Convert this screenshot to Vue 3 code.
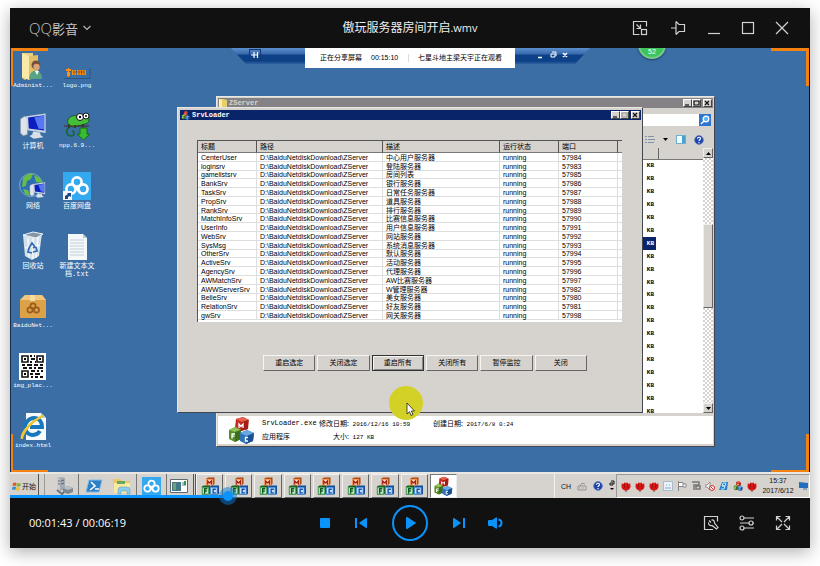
<script setup>
import { ref, computed } from 'vue'

const duration = 379
const position = ref(102)
const played = computed(() => (position.value / duration) * 100 + '%')

const services = [
  ['CenterUser', '中心用户服务器', 57984],
  ['loginsrv', '登陆服务器', 57983],
  ['gamelistsrv', '房间列表', 57985],
  ['BankSrv', '银行服务器', 57986],
  ['TaskSrv', '日常任务服务器', 57987],
  ['PropSrv', '道具服务器', 57988],
  ['RankSrv', '排行服务器', 57989],
  ['MatchInfoSrv', '比赛信息服务器', 57990],
  ['UserInfo', '用户信息服务器', 57991],
  ['WebSrv', '网站服务器', 57992],
  ['SysMsg', '系统消息服务器', 57993],
  ['OtherSrv', '默认服务器', 57994],
  ['ActiveSrv', '活动服务器', 57995],
  ['AgencySrv', '代理服务器', 57996],
  ['AWMatchSrv', 'AW比赛服务器', 57997],
  ['AWWServerSrv', 'W管理服务器', 57982],
  ['BelleSrv', '美女服务器', 57980],
  ['RelationSrv', '好友服务器', 57981],
  ['gwSrv', '网关服务器', 57998]
]
const actions = ['重启选定', '关闭选定', '重启所有', '关闭所有', '暂停监控', '关闭']
</script>

<template>
  <div class="page">
    <svg class="defs" aria-hidden="true">
      <symbol id="blocks" viewBox="0 0 20 20">
        <path d="M6 1l2-1h7v7l-2 2H6z" fill="#a8430e" /><rect x="5.500" y="1.500" width="8" height="8" fill="#f08a4b" /><rect x="6.500" y="2.500" width="6" height="6" fill="#fbd7b5" />
        <path d="M7.500 8V4l2 2 2-2v4" fill="none" stroke="#a11b12" stroke-width="1.400" />
        <path d="M1 10l2-1h7v9l-1 1H1z" fill="#1d5c2b" /><rect x="1" y="10.500" width="8" height="8.500" fill="#3f9a4e" /><rect x="2" y="11.500" width="6" height="6.500" fill="#c3e6c5" />
        <path d="M4 18v-5.500h3M4 15h2.500" fill="none" stroke="#125a24" stroke-width="1.500" />
        <path d="M10 10l2-1h8v9l-1 1h-9z" fill="#164d93" /><rect x="10" y="10.500" width="8.500" height="8.500" fill="#3f86d2" /><rect x="11" y="11.500" width="6.500" height="6.500" fill="#c4e0fa" />
        <path d="M16.500 13h-3v4h3" fill="none" stroke="#1550a6" stroke-width="1.500" />
      </symbol>
      <symbol id="cubes" viewBox="0 0 28 28">
        <path d="M9 3l7-2 6 3-1 9-7 2-6-3z" fill="#c52c20" /><path d="M9 3l7-2 6 3-7 2z" fill="#e8604f" /><path d="M21 4l-6 2-1 9 7-2z" fill="#a31d14" />
        <path d="M2 14l6-3 6 3v9l-6 3-6-3z" fill="#568c29" /><path d="M2 14l6-3 6 3-6 2z" fill="#8fc155" /><path d="M14 14l-6 2v10l6-3z" fill="#3d6e1c" />
        <path d="M13 17l7-3 7 3-1 8-7 3-6-3z" fill="#2f72b8" /><path d="M13 17l7-3 7 3-7 3z" fill="#68a8e0" /><path d="M27 17l-7 3-1 8 7-3z" fill="#1c4f91" />
        <path d="M12 12V8l2 2.500L16 8v4M5 22.500V18h3M5 20.200h2.500M21 21.500h-2.500V25H21" fill="none" stroke="#fff" stroke-width="1.300" />
      </symbol>
      <symbol id="cloud" viewBox="0 0 28 28">
        <g fill="none" stroke="#fff" stroke-width="2.600"><circle cx="14" cy="10" r="4.600" /><circle cx="8" cy="17" r="4.600" /><circle cx="20" cy="17" r="4.600" /><path d="M11 14l6 6" /></g>
      </symbol>
      <symbol id="help" viewBox="0 0 12 12">
        <circle cx="6" cy="6" r="5.300" fill="#1d44ac" stroke="#7085c0" /><path d="M4.200 4.500c0-2.500 3.800-2.300 3.600 0C7.700 5.900 6 5.700 6 7.300M6 8.400v1.400" fill="none" stroke="#fff" stroke-width="1.400" />
      </symbol>
      <symbol id="monitor" viewBox="0 0 20 20">
        <path d="M1 5l3-2 2 1v12l-3 1-2-2z" fill="#dfe4ea" stroke="#8795a5" stroke-width=".500" /><path d="M5 3l14-2v14L6 13z" fill="#c9d3df" /><path d="M6.500 4L18 2.400v10.800l-11-1.500z" fill="#0b1ec0" /><path d="M11 4l7-1.600v10l-4-.5z" fill="#5577f0" /><path d="M10 14l5 .6.500 2 2 1.500-7 1-3-2 2-1z" fill="#d8e0e8" />
      </symbol>
      <symbol id="flower" viewBox="0 0 12 12">
        <path d="M1 2l2 1 1.500-2L6 2l1.500-1L9 3l2-1 .5 4C11 9 9 11 6 11S1 9 .5 6z" fill="#d81616" /><path d="M4 3v5M8 3v5" stroke="#8e0c0c" /><path d="M5 11h2v1H5z" fill="#333" />
      </symbol>
    </svg>

    <main class="player">
      <header class="titlebar">
        <button class="brand"><span class="brand-name">QQ<span class="brand-zh">影音</span></span>
          <svg width="8" height="6" viewBox="0 0 8 6"><path d="M.5 1L4 4.500 7.500 1" fill="none" stroke="#b5b5b5" stroke-width="1.200" /></svg>
        </button>
        <h1 class="title">傲玩服务器房间开启<span class="ext">.wmv</span></h1>
        <nav class="window-tools">
          <button class="wide" aria-label="Mini mode"><svg width="16" height="16" viewBox="0 0 16 16"><path d="M14.500 6.500v-5H1.500v13h6M4.500 4.500l4 4M8.500 4.500v4h-4" /><rect x="9.500" y="9.500" width="5" height="5" /></svg></button>
          <button class="wide" aria-label="Pin"><svg width="16" height="16" viewBox="0 0 16 16"><path d="M1 8h5M6 1.500v13M6 1.500l3 3h5.500v7H9l-3 3" /></svg></button>
          <button aria-label="Minimize"><svg width="14" height="14" viewBox="0 0 14 14"><path d="M1 12.500h12" /></svg></button>
          <button aria-label="Maximize"><svg width="14" height="14" viewBox="0 0 14 14"><rect x="1.500" y="1.500" width="11" height="11" /></svg></button>
          <button aria-label="Close"><svg width="14" height="14" viewBox="0 0 14 14"><path d="M1 1l12 12M13 1L1 13" /></svg></button>
        </nav>
      </header>

      <section class="stage">
        <div class="desktop">
          <div class="shortcuts">
            <div class="shortcut">
              <svg width="30" height="30" viewBox="0 0 30 30"><path d="M4 2l11 0v22l-8 5-3-2z" fill="#ead27c" /><path d="M4 2l7 3v24l-7-3z" fill="#fae9a6" /><path d="M11 5l9-1v21l-9 4z" fill="#dfc069" /><circle cx="18" cy="14" r="4.500" fill="#76503a" /><circle cx="18.500" cy="16" r="3.200" fill="#d9a47a" /><path d="M11 28c1-8 5-9 8-8s5 3 5 8z" fill="#56a386" /><path d="M17 20l2 4 2-4z" fill="#fff" /></svg>
              <span>Administ...</span>
            </div>
            <div class="shortcut">
              <svg width="30" height="30" viewBox="0 0 30 30"><path d="M2 27.500h26V17" fill="none" stroke="#2a568b" /><path d="M4 18h5v2H4zM5 21h3v4H5zM6 17h1v9H6zM10 19h4v5h-4zM15 19h4v5h-4zM20 19h4v5h-4z" fill="#f49412" /><path d="M11 21h12M12 19v5M17 19v5M22 19v5" stroke="#8b4307" stroke-width=".700" /></svg>
              <span>logo.png</span>
            </div>
            <div class="shortcut">
              <svg width="28" height="30" viewBox="0 0 20 20"><use href="#monitor" /></svg>
              <span class="zh">计算机</span>
            </div>
            <div class="shortcut">
              <svg width="30" height="30" viewBox="0 0 30 30"><path d="M6 13C4 7 10 3 17 5l9 1c2 3 1 6-3 7l-7 2c-4 2-7 1-10-2z" fill="#43be38" stroke="#173b17" stroke-width=".700" /><path d="M8 16c-5 2-4 9 1 9 4 0 4-5 1-5" fill="none" stroke="#176635" stroke-width="1.600" /><circle cx="18" cy="6" r="3.500" fill="#fff" stroke="#111" /><circle cx="24" cy="5" r="3" fill="#fff" stroke="#111" /><circle cx="18" cy="6" r="1.200" /><circle cx="24" cy="5" r="1" /><path d="M2 15h25M7 13v4M13 14v3M21 13v4" stroke="#402a1b" stroke-width="1.200" /><path d="M18 17h7v6h3l-6.500 6-6.500-6h3z" fill="#36bb31" stroke="#1b661b" /></svg>
              <span>npp.6.9...</span>
            </div>
            <div class="shortcut">
              <svg width="30" height="30" viewBox="0 0 30 30"><circle cx="13" cy="14" r="11.500" fill="#2e6db6" stroke="#7ba9cc" /><path d="M5 7c4-5 9-5 10-4l-2 5-4 2-1 5-4 1zM16 4l6 3 2 5-6-1zM5 18l5 1 2 6-5-2z" fill="#65bd45" /><svg x="11" y="9" width="17" height="20"><use href="#monitor" /></svg></svg>
              <span class="zh">网络</span>
            </div>
            <div class="shortcut">
              <svg width="30" height="30" viewBox="0 0 30 30"><rect x="1" y="1" width="28" height="28" fill="#35a9ef" /><svg x="1" y="1" width="28" height="28"><use href="#cloud" /></svg><rect x="1" y="20" width="9" height="9" fill="#f7f7f7" /><path d="M3 28v-3l3-2-1-1h4v4l-1-1-2 1v2z" fill="#1c4685" /></svg>
              <span class="zh">百度网盘</span>
            </div>
            <div class="shortcut">
              <svg width="30" height="30" viewBox="0 0 30 30"><path d="M5 4l19-2-3 23-7 4-7-4z" fill="#d3e1eb" /><path d="M5 4l10-3 10 2-7 4z" fill="#8496a6" stroke="#e9f2f7" /><path d="M10 7l1 19M15 7v21M20 6l-2 21M7 17l15-3" stroke="#f5f9fb" stroke-width="1.500" /><path d="M11 17l3-5 3 4-2 1M18 16l1 4-4 1M14 22l-4-1 1-4" fill="none" stroke="#376eb4" stroke-width="1.800" /></svg>
              <span class="zh">回收站</span>
            </div>
            <div class="shortcut">
              <svg width="30" height="30" viewBox="0 0 30 30"><path d="M6 3h15l4 4v22H6z" fill="#f5f8fa" /><path d="M21 3v4h4z" fill="#b9c7d1" /><path d="M8 9h14M8 12h14M8 15h14M8 18h14M8 21h14M8 24h14" stroke="#c2ced8" /></svg>
              <span class="zh">新建文本文<br />档.txt</span>
            </div>
            <div class="shortcut solo">
              <svg width="30" height="30" viewBox="0 0 30 30"><path d="M2 9l5-5h17l4 5v18H2z" fill="#d2943b" /><path d="M2 9l5-5h17l4 5z" fill="#f0c77d" /><path d="M2 9h26v18H2z" fill="#dda148" /><path d="M12 4h5v6h-5z" fill="#f8dc9e" /><g fill="none" stroke="#9a5d1e" stroke-width="1.600"><circle cx="15" cy="15" r="2.600" /><circle cx="12" cy="19" r="2.600" /><circle cx="18.500" cy="19" r="2.600" /></g></svg>
              <span>BaiduNet...</span>
            </div>
            <div class="shortcut solo">
              <svg width="30" height="30" viewBox="0 0 30 30"><rect x="1" y="2" width="27" height="27" fill="#fff" /><path d="M4 5h6v6H4zM19 5h6v6h-6zM4 20h6v6H4z" fill="none" stroke="#111" stroke-width="1.600" /><path d="M6 7h2v2H6zM21 7h2v2h-2zM6 22h2v2H6z" /><path d="M12 5h2M16 5h1M13 8h4M12 11h2M17 11h1M4 14h3M9 14h5M16 14h4M22 14h3M5 17h4M11 17h3M16 17h2M20 17h5M13 20h4M19 20h2M23 20h2M12 23h3M17 23h5M13 26h2M17 26h3M22 26h3" stroke="#111" stroke-width="1.800" /></svg>
              <span>img_plac...</span>
            </div>
            <div class="shortcut solo">
              <svg width="30" height="30" viewBox="0 0 30 30"><path d="M8 2h15l5 5v22H8z" fill="#f8fbfd" /><path d="M23 2v5h5z" fill="#b8c9d5" /><path d="M22 20c-2 3-5 4-7 4-5 0-8-4-8-8s4-9 9-9c5 0 8 4 8 9H12" fill="none" stroke="#1878be" stroke-width="4" /><path d="M3 28C1 24 9 11 24 4c2-1 2 1 1 2C12 13 6 22 5 28z" fill="#edc733" /></svg>
              <span>index.html</span>
            </div>
          </div>

          <div class="share-bar">
            <span class="share-pin"><svg width="8" height="8" viewBox="0 0 8 8"><path d="M0 4h3M3 1v6M3 4h4M6.500 1v6" fill="none" stroke="#fff" stroke-width="1.200" /></svg></span>
            <div class="share-note"><span>正在分享屏幕</span><span class="share-time">00:15:10</span><i></i><span class="share-watch">七星斗地主梁天宇正在观看</span></div>
            <svg class="share-ctl" width="32" height="10" viewBox="0 0 32 10"><path d="M1 7.500h4M26 3l4 4M30 3l-4 4" stroke="#fff" stroke-width="1.500" /><path d="M14 4h4v3h-4zM15 2h4v4" fill="none" stroke="#fff" /></svg>
          </div>
          <div class="bubble">52</div>

          <div class="win explorer">
            <div class="bar gray">
              <svg width="8" height="9" viewBox="0 0 8 9"><path d="M0 0h4l4 1v8H1L0 8z" fill="#e9cf6b" /><path d="M0 0l3 1v8L0 8z" fill="#fff1ad" /></svg>
              <span class="bar-text">ZServer</span>
              <div class="bar-btns"><button aria-label="Minimize window"><svg width="9" height="8" viewBox="0 0 9 8"><path d="M2 6h4" /></svg></button><button aria-label="Restore window"><svg width="9" height="8" viewBox="0 0 9 8"><path d="M2 2h5v4H2z" /></svg></button><button class="x" aria-label="Close window"><svg width="9" height="8" viewBox="0 0 9 8"><path d="M2 2l4 4M6 2L2 6" /></svg></button></div>
            </div>
            <div class="address"><input type="text" aria-label="Search folder" /><button aria-label="Search"><svg width="12" height="12" viewBox="0 0 12 12"><circle cx="7" cy="5" r="2.800" fill="#5db6ef" stroke="#fff" stroke-width="1.300" /><path d="M5 7l-3 3" stroke="#fff" stroke-width="1.500" /></svg></button></div>
            <div class="tools">
              <svg width="10" height="9" viewBox="0 0 10 9"><path d="M0 1.500h2M3 1.500h6M0 4.500h2M3 4.500h7M0 7.500h2M3 7.500h6" stroke="#8492a5" /></svg>
              <svg width="5" height="3" viewBox="0 0 5 3"><path d="M0 0h5L2.500 3z" /></svg>
              <svg width="10" height="9" viewBox="0 0 10 9"><rect x=".5" y=".5" width="9" height="8" fill="#f4fafd" stroke="#6daed1" /><path d="M6 1h3v7H6z" fill="#43a4cb" /></svg>
              <svg width="10" height="10"><use href="#help" /></svg>
            </div>
            <div class="files">
              <div class="list">
                <div class="list-head"><span></span></div>
                <ul><li v-for="n in 20" :key="n" :class="{ selected: n === 7 }"><span>KB</span></li></ul>
              </div>
              <div class="scroll"><button aria-label="Scroll up"><svg width="5" height="3" viewBox="0 0 5 3"><path d="M0 3h5L2.500 0z" /></svg></button><div class="thumb"></div><button aria-label="Scroll down"><svg width="5" height="3" viewBox="0 0 5 3"><path d="M0 0h5L2.500 3z" /></svg></button></div>
            </div>
            <div class="details">
              <svg width="28" height="28"><use href="#cubes" /></svg>
              <dl>
                <dt class="big">SrvLoader.exe</dt><dd><span class="zh">修改日期:</span> 2016/12/16 10:59</dd><dd><span class="zh">创建日期:</span> 2017/6/8 0:24</dd>
                <dt class="zh">应用程序</dt><dd class="size"><span class="zh">大小:</span> 127 KB</dd>
              </dl>
            </div>
          </div>

          <div class="win loader">
            <div class="bar navy">
              <svg width="9" height="9"><use href="#cubes" /></svg>
              <span class="bar-text">SrvLoader</span>
              <div class="bar-btns"><button aria-label="Minimize SrvLoader"><svg width="9" height="8" viewBox="0 0 9 8"><path d="M2 6h4" /></svg></button><button disabled aria-label="Maximize SrvLoader"><svg width="9" height="8" viewBox="0 0 9 8"><path d="M2 2h5v4H2z" /></svg></button><button class="x" aria-label="Close SrvLoader"><svg width="9" height="8" viewBox="0 0 9 8"><path d="M2 2l4 4M6 2L2 6" /></svg></button></div>
            </div>
            <div class="grid-box">
              <table>
                <colgroup><col class="c1" /><col class="c2" /><col class="c3" /><col class="c4" /><col class="c4" /><col /></colgroup>
                <thead><tr><th>标题</th><th>路径</th><th>描述</th><th>运行状态</th><th>端口</th><th></th></tr></thead>
                <tbody>
                  <tr v-for="s in services" :key="s[0]"><td>{{ s[0] }}</td><td>D:\BaiduNetdiskDownload\ZServer</td><td>{{ s[1] }}</td><td>running</td><td>{{ s[2] }}</td><td></td></tr>
                </tbody>
              </table>
            </div>
            <div class="actions"><button v-for="(a, i) in actions" :key="a" :class="{ focused: i === 2 }">{{ a }}</button></div>
          </div>

          <div class="pointer"><svg width="9" height="15" viewBox="0 0 9 15"><path d="M1 1v11l2.500-2.300L5 13.500l2-1-1.700-3.500H8.500z" fill="#fff" stroke="#222" stroke-width=".800" /></svg></div>
          <i class="corner tl"></i><i class="corner tr"></i><i class="corner bl"></i><i class="corner br"></i>
        </div>

        <div class="taskbar">
          <button class="start"><svg width="9" height="9" viewBox="0 0 9 9"><path d="M1 1q2-1 3.500 0L4 4Q2 3 .5 4z" fill="#ec5326" /><path d="M5 1q2 1 4 0l-.7 3q-2 1-3.800 0z" fill="#7eb52c" /><path d="M.5 5q2-1 3.500 0l-.5 3Q2 7 0 8z" fill="#328fd2" /><path d="M4.500 5q2 1 3.700 0l-.7 3q-2 1-3.500 0z" fill="#f4bd25" /></svg>开始</button>
          <div class="quick">
            <button aria-label="Server manager"><svg width="18" height="18" viewBox="0 0 18 18"><path d="M2 1l5-1 3 1v11l-5 2-3-1z" fill="#a3abb0" /><path d="M2 1l3 1v12l-3-1z" fill="#c5ccd0" /><path d="M3 4h2M3 7h2M6 4l3-1M6 7l3-1" stroke="#5a666d" /><path d="M8 11l5-2 5 2v4l-5 2-5-2z" fill="#7e888f" /><path d="M8 11l5-2 5 2-5 2z" fill="#bac1c5" /><path d="M2 13l5 4 2-2" fill="none" stroke="#69737a" stroke-width="2" /></svg></button>
            <button aria-label="PowerShell"><svg width="18" height="18" viewBox="0 0 18 18"><path d="M4 3h13l-3 12H1z" fill="#2b7fc4" stroke="#8bbbe1" /><path d="M6 5l4 4-5 4M10 12h4" fill="none" stroke="#fff" stroke-width="1.600" /></svg></button>
            <button aria-label="Explorer"><svg width="18" height="18" viewBox="0 0 18 18"><path d="M0 2h7l2 2h8v12H1z" fill="#e9c862" /><path d="M1 6h16v10H1z" fill="#fae9a0" /><path d="M4 4h8v3H4z" fill="#66a85e" /><path d="M5 17v-4q0-3 3-3h6q3 0 3 3v4h-3v-3H8v3z" fill="#8bcceb" stroke="#539ab9" stroke-width=".500" /></svg></button>
            <button class="wide-gap" aria-label="Baidu"><svg width="19" height="19" viewBox="0 0 28 28"><path d="M0 0h28v28H0z" fill="#35a9ef" /><use href="#cloud" /></svg></button>
            <button aria-label="Console"><svg width="18" height="16" viewBox="0 0 18 16"><path d="M.5 1.500h17v13H.5z" fill="#fff" stroke="#5c6870" /><path d="M2 4h9v9H2z" fill="#427788" /><path d="M3 5h3v7H3z" fill="#719f78" /><path d="M12 5h4M12 7h4" stroke="#567586" /><path d="M15 3v4" stroke="#2f9c41" stroke-width="2" /></svg></button>
          </div>
          <div class="tasks">
            <button v-for="n in 8" :key="n" :aria-label="'Service ' + n"><svg width="18" height="19"><use href="#blocks" /></svg></button>
            <button class="active" aria-label="SrvLoader"><svg width="20" height="20"><use href="#cubes" /></svg></button>
          </div>
          <div class="lang">
            <span>CH</span>
            <svg width="10" height="9" viewBox="0 0 10 9"><path d="M1 4h8v4H1zM3 4l2-3 3 1" fill="none" stroke="#959595" /><path d="M2 6h6" stroke="#999" stroke-dasharray="1 1" /></svg>
            <svg width="10" height="10"><use href="#help" /></svg>
            <svg width="6" height="12" viewBox="0 0 6 12"><path d="M1 3h3v2H1zM2 1h3v3" fill="none" stroke="#111" /><path d="M1 8h4l-2 2z" /></svg>
          </div>
          <div class="tray">
            <svg v-for="n in 3" :key="n" width="10" height="11"><use href="#flower" /></svg>
            <svg width="10" height="10" viewBox="0 0 10 10"><rect x=".5" y=".5" width="9" height="9" fill="#e9f2fa" stroke="#a8bccb" /><path d="M2 7h6M3 4h1M6 4h1" stroke="#8faabd" /></svg>
            <svg width="10" height="10" viewBox="0 0 10 10"><path d="M1.500 0v10M2 1.500h4v4H2M6 3h3v3H6" fill="#fff" stroke="#858585" /></svg>
            <svg width="10" height="10" viewBox="0 0 10 10"><path d="M1 1h7v3H3v5M5 5h4v3H5z" fill="none" stroke="#777" stroke-width="1.500" /></svg>
            <svg width="10" height="10" viewBox="0 0 10 10"><path d="M0 4h2l3-3v8L2 6H0z" fill="#eee" stroke="#777" stroke-width=".700" /><circle cx="7" cy="7" r="2.500" fill="#fff" stroke="#d12d25" /><path d="M5.500 5.500l3 3" stroke="#d12d25" /></svg>
            <svg width="10" height="10" viewBox="0 0 10 10"><path d="M3 1h6l-1 8H0z" fill="#2a81c5" /><path d="M4 2h3L6 5H3zM3 5h3L5 8H2" fill="none" stroke="#c4e8ff" /></svg>
            <svg width="10" height="10"><use href="#cubes" /></svg>
            <svg width="10" height="11"><use href="#flower" /></svg>
            <time>15:37<br />2017/6/12</time>
            <svg width="9" height="8" viewBox="0 0 9 8"><path d="M0 0l9 1v5H0z" fill="#246fbd" /><path d="M4 6h4v2H4z" fill="#84a5bd" /></svg>
          </div>
        </div>
        <input v-model.number="position" class="seek" type="range" min="0" :max="duration" aria-label="播放进度" :style="{ '--played': played }" />
      </section>

      <footer class="controls">
        <div class="clock"><span>00:01:43</span><span>/</span><span>00:06:19</span></div>
        <div class="transport">
          <button aria-label="停止"><svg width="16" height="16" viewBox="0 0 16 16"><rect x="3" y="3" width="10" height="10" rx="1" /></svg></button>
          <button aria-label="上一个"><svg width="16" height="16" viewBox="0 0 16 16"><path d="M2 3h2v10H2zM14 4v8q0 1.500-1.300.7L6.500 8.600q-.8-.6 0-1.200l6.200-4.100Q14 2.500 14 4z" /></svg></button>
          <button class="play" aria-label="播放"><svg width="38" height="38" viewBox="0 0 38 38"><circle cx="19" cy="19" r="17" fill="none" stroke="#0a93fb" stroke-width="2" /><path d="M15 14q0-1.500 1.300-1l8.200 5.400q.8.600 0 1.200L16.300 25Q15 25.500 15 24z" /></svg></button>
          <button aria-label="下一个"><svg width="16" height="16" viewBox="0 0 16 16"><path d="M12 3h2v10h-2zM2 4v8q0 1.500 1.300.7l6.200-4.100q.8-.6 0-1.200L3.300 3.300Q2 2.500 2 4z" /></svg></button>
          <button aria-label="音量"><svg width="16" height="16" viewBox="0 0 16 16"><path d="M2 5h3l4-2.500q1-.5 1 .5v10q0 1-1 .5L5 11H2q-1 0-1-1V6q0-1 1-1z" /><path d="M11.500 4.500q3 .5 3 3.500t-3 3.500" fill="none" stroke="#0a93fb" stroke-width="2" /></svg></button>
        </div>
        <div class="extras">
          <button aria-label="工具箱"><svg width="16" height="16" viewBox="0 0 16 16"><path d="M14.500 6.500v-5H1.500v13H10" /><path d="M6 5.500l2 2M8.500 5q3-.5 3 3l3.500 4.500-1.500 1.500L9 10.500q-3.500.5-3.500-3" /></svg></button>
          <button aria-label="播放设置"><svg width="16" height="16" viewBox="0 0 16 16"><circle cx="3" cy="3" r="2" /><path d="M5 3h10M1 8h9M14 8h1M5 13h10" /><circle cx="12" cy="8" r="2" /><circle cx="3" cy="13" r="2" /></svg></button>
          <button aria-label="全屏"><svg width="16" height="16" viewBox="0 0 16 16"><path d="M1.500 5.500v-4h4M10.500 1.500h4v4M14.500 10.500v4h-4M5.500 14.500h-4v-4M2 2l5 5M14 2L9 7M14 14L9 9M2 14l5-5" /></svg></button>
        </div>
      </footer>
    </main>
  </div>
</template>

<style>
body { margin: 0; background: #fff; }
</style>

<style scoped>
* { box-sizing: border-box; }
button { border: 0; padding: 0; margin: 0; background: none; color: inherit; font: inherit; display: flex; align-items: center; justify-content: center; }
svg { display: block; flex: none; }
.defs { position: absolute; width: 0; height: 0; }
.page { min-height: 100vh; padding: 8px 10px 18px; display: flex; overflow: hidden; font-family: "Open Sans", "Noto Sans CJK SC", sans-serif; }
.player { flex: 1; min-width: 0; display: flex; flex-direction: column; background: #111; box-shadow: 0 4px 16px rgba(0, 0, 0, .32); }

.titlebar { height: 40px; display: grid; grid-template-columns: 1fr auto 1fr; align-items: center; color: #eee; }
.brand { justify-self: start; margin-left: 19px; gap: 5px; color: #c4c4c4; }
.brand-name { font-size: 15px; font-weight: 300; line-height: 20px; }
.brand-zh { font-size: 13px; font-weight: 400; }
.title { margin: 0; font-size: 12px; font-weight: 400; line-height: 18px; }
.ext { font-size: 11px; }
.window-tools { display: flex; justify-self: end; padding-right: 11px; }
.window-tools button { width: 34px; height: 40px; }
.window-tools .wide { width: 38px; }
.window-tools svg, .extras svg { fill: none; stroke: #d2d2d2; stroke-width: 1.2; }

.stage { flex: 1; position: relative; display: flex; flex-direction: column; }
.desktop { flex: 1; min-height: 424px; position: relative; overflow: hidden; background: #3a6ea5; border-left: 1px solid #1b2c49; border-right: 1px solid #111; color: #000; font-size: 7px; line-height: 8px; font-family: "Liberation Sans", "Noto Sans CJK SC", sans-serif; }
.zh { font-size: 7px; font-family: "Liberation Mono", "Noto Sans CJK SC", monospace; }
.shortcuts { display: grid; grid-template-columns: 44px 44px; grid-auto-rows: 60px; padding-top: 3px; width: 88px; }
.shortcut { display: flex; flex-direction: column; align-items: center; gap: 1px; color: #fff; text-align: center; font-family: "Liberation Mono", monospace; font-size: 6px; }
.shortcut .zh { white-space: nowrap; }
.solo { grid-column: 1; }

.share-bar { position: absolute; top: 0; left: 220px; width: 359px; height: 20px; display: flex; padding-left: 18px; }
.share-bar::before { content: ""; position: absolute; inset: 0 0 4px; background: linear-gradient(#5c8fce, #3769ac 6px, #0c4087 7px, #0c4087 13px, #2f62a0); clip-path: polygon(0 0, 100% 0, 344px 100%, 15px 100%); }
.share-pin { position: relative; width: 12px; height: 12px; margin-top: 1px; border: 1px solid #16386c; display: grid; place-items: center; }
.share-note { position: relative; width: 210px; margin-left: 44px; background: #fff; display: flex; align-items: center; padding: 0 13px 0 15px; }
.share-time { margin-left: 9px; }
.share-note i { width: 1px; height: 8px; background: #ddd; margin: 0 auto; }
.share-ctl { position: relative; margin: 2px 0 0 22px; }
.bubble { position: absolute; top: -17px; left: 627px; width: 28px; height: 28px; border-radius: 50%; background: #3cc65a; border: 2px solid #7cc98d; box-shadow: 0 1px 2px #1c4067; color: #fff; text-align: center; padding-top: 15px; }

.win { position: absolute; background: #d6d3ce; border: 1px solid; border-color: #e9e7e2 #44474d #44474d #e9e7e2; display: flex; flex-direction: column; }
.bar { height: 10px; flex: none; display: flex; align-items: center; gap: 2px; padding: 0 1px; }
.gray { background: #848284; color: #d6d3ce; }
.navy { background: #0a246a; color: #fff; }
.bar-text { font-family: "Liberation Mono", monospace; font-weight: 700; }
.bar-btns { margin-left: auto; display: flex; }
.bar-btns button { width: 9px; height: 8px; background: #d6d3ce; border: 1px solid; border-color: #fff #444 #444 #fff; }
.bar-btns .x { margin-left: 2px; }
.bar-btns svg { fill: none; stroke: #111; stroke-width: 1.2; }
.bar-btns button:disabled svg { stroke: #999; }

.explorer { left: 205px; top: 48px; width: 499px; height: 351px; padding: 1px 1px 2px; }
.address { display: flex; justify-content: flex-end; padding: 6px 2px 5px 0; }
.address input { width: 100px; height: 12px; border: 0; padding: 0; background: #fff; border-radius: 0; }
.address button { background: #2c75cf; width: 12px; height: 12px; }
.tools { display: flex; justify-content: flex-end; align-items: center; gap: 8px; height: 17px; padding-right: 9px; }
.files { flex: 1; min-height: 0; display: flex; background: #fff; }
.list { flex: 1; min-width: 0; overflow: hidden; }
.list-head { height: 12px; background: #d6d3ce; border-bottom: 1px solid #777; }
.list-head span { display: block; width: 441px; height: 11px; border-right: 1px solid #666; }
.list ul { list-style: none; margin: 0; padding: 0; height: 258px; width: 438px; display: grid; grid-auto-rows: 1fr; }
.list li { display: flex; align-items: center; justify-content: flex-end; padding-right: 2px; font: 700 6px/8px "Liberation Mono", monospace; }
.list .selected { background: #0a246a; color: #fff; }
.scroll { width: 10px; display: flex; flex-direction: column; background: repeating-conic-gradient(#fff 0 25%, #d6d3ce 0 50%) 0 0 / 4px 4px; }
.scroll button { height: 10px; flex: none; background: #d6d3ce; border: 1px solid; border-color: #eee #666 #666 #eee; }
.thumb { background: #d6d3ce; border: 1px solid; border-color: #eee #666 #666 #eee; height: 84px; margin: 66px 0 auto; }
.details { height: 31px; flex: none; border-top: 3px solid #d6d3ce; background: #fff; display: flex; align-items: center; gap: 7px; padding-left: 9px; }
.details dl { margin: 0; display: grid; grid-template-columns: 57px 114px auto; row-gap: 3px; font: 6px/8px "Liberation Mono", monospace; }
.details dd { margin: 0; }
.details .big { font-size: 7px; }
.details .size { padding-left: 14px; }
.details .zh { font-size: 7px; line-height: 8px; font-family: "Noto Sans CJK SC", sans-serif; }

.loader { left: 166px; top: 59px; width: 466px; height: 306px; padding: 2px 1px 2px 2px; }
.grid-box { width: 425px; height: 182px; margin: 20px 0 0 17px; background: #fff; border-top: 1px solid #555; border-left: 1px solid #555; flex: none; }
table { width: 424px; height: 179px; border-collapse: separate; border-spacing: 0; table-layout: fixed; }
.c1 { width: 59px; } .c2 { width: 126px; } .c3 { width: 117px; } .c4 { width: 59px; }
th, td { padding: 0 3px; font-weight: 400; text-align: left; line-height: 7px; white-space: nowrap; }
th { height: 12px; background: #d6d3ce; border-right: 1px solid #555; border-bottom: 1px solid #777; }
th:last-child { border-right: 0; }
td { box-shadow: inset -1px -1px #dedede; }
td:last-child { box-shadow: inset 0 -1px #dedede; }
.actions { display: grid; grid-template-columns: repeat(6, 1fr); gap: 2px; width: 324px; margin: 33px 0 0 83px; }
.actions button { height: 16px; background: #d6d3ce; border: 1px solid; border-color: #f6f5f2 #666 #666 #f6f5f2; }
.actions .focused { border-color: #333; box-shadow: inset 1px 1px #f6f5f2, inset -1px -1px #888; }

.pointer { position: absolute; left: 378px; top: 338px; width: 34px; height: 34px; border-radius: 50%; background: #d3d126; padding: 16px 0 0 17px; }
.corner { position: absolute; width: 38px; height: 38px; border: 0 solid #f5820f; }
.tl { top: 0; left: -1px; border-width: 3px 0 0 3px; }
.tr { top: 0; right: 0; border-width: 3px 3px 0 0; }
.bl { bottom: 0; left: -1px; border-width: 0 0 2px 3px; }
.br { bottom: 0; right: 0; border-width: 0 3px 2px 0; }

.taskbar { height: 26px; display: flex; background: #d6d3ce; border-top: 2px solid #e9e7e3; font: 7px/9px "Liberation Sans", "Noto Sans CJK SC", sans-serif; color: #111; }
.taskbar button { height: 24px; }
.start { width: 29px; gap: 1px; border-right: 1px solid #555; }
.quick { display: flex; margin-left: 5px; border-left: 1px solid #999; padding-left: 5px; border-right: 3px double #555; width: 152px; }
.quick button { width: 29px; border-right: 1px solid #777; }
.quick button:nth-child(2) { border-right: 0; }
.quick .wide-gap { width: 30px; }
.quick button:last-child { width: 24px; border: 0; }
.tasks { display: grid; grid-template-columns: repeat(9, 1fr); width: 263px; }
.tasks button { border: 1px solid; border-color: #f3f1ed #666 #666 #f3f1ed; margin-right: 2px; }
.tasks .active { background: #fff; border-color: #777 #eee #eee #777; }
.lang { display: flex; align-items: center; gap: 6px; margin-left: auto; border-left: 1px solid #f3f1ed; padding: 0 1px 0 6px; }
.tray { display: flex; align-items: center; gap: 4px; border: 1px solid; border-color: #999 #fff #fff #999; padding: 0 1px 0 4px; }
.tray time { width: 34px; text-align: center; line-height: 10px; }

.seek { -webkit-appearance: none; appearance: none; position: absolute; left: 0; bottom: -7px; width: 100%; height: 18px; margin: 0; background: linear-gradient(90deg, #0a93fb var(--played), transparent 0) center / 100% 3px no-repeat; }
.seek::-webkit-slider-thumb { -webkit-appearance: none; width: 10px; height: 10px; border-radius: 50%; background: #0a93fb; box-shadow: 0 0 0 4px rgba(10, 120, 210, .5); }

.controls { height: 50px; display: grid; grid-template-columns: 1fr auto 1fr; align-items: center; }
.clock { display: flex; gap: 3px; padding-left: 19px; font-size: 11px; line-height: 16px; color: #fff; }
.transport, .extras { display: flex; align-items: center; }
.transport button, .extras button { width: 36px; height: 38px; }
.transport svg { fill: #0a93fb; }
.transport .play { width: 38px; margin: 0 12px; }
.extras { justify-self: end; padding-right: 9px; }
</style>
